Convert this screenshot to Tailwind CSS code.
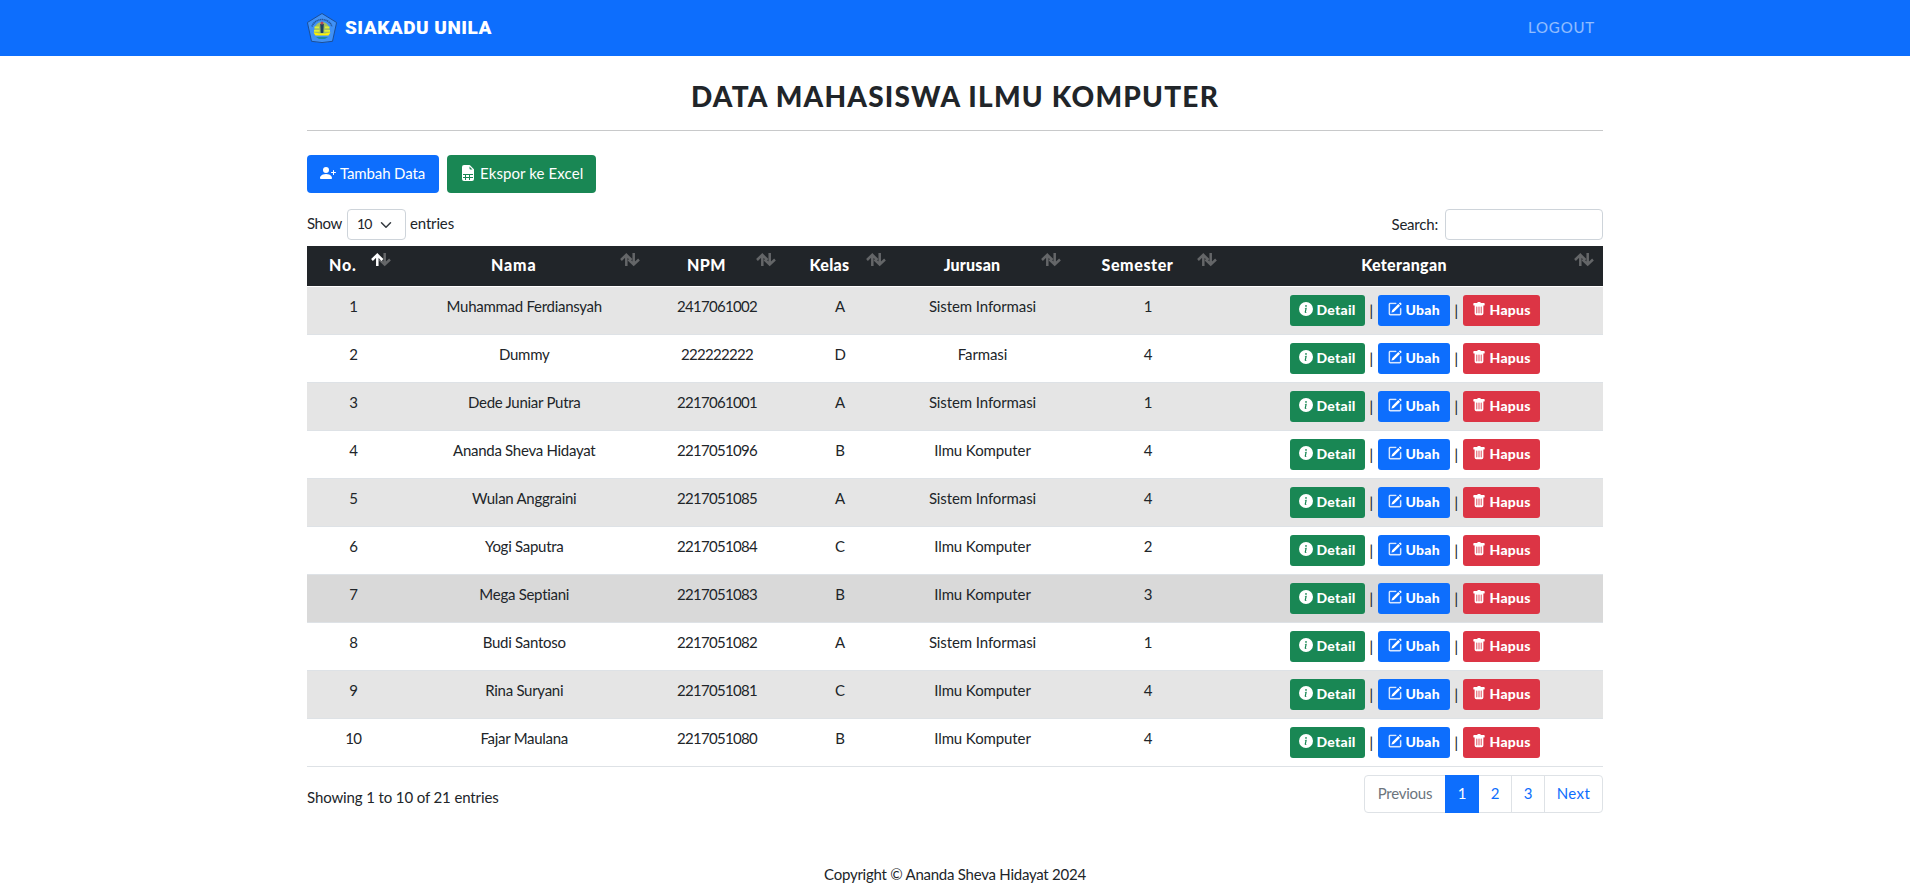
<!DOCTYPE html>
<html lang="id">
<head>
<meta charset="utf-8">
<title>SIAKADU UNILA</title>
<script src="https://cdn.jsdelivr.net/npm/@tailwindcss/browser@4"></script>
</head>
<body class="bg-white font-['Lato','Liberation_Sans',sans-serif] text-[15px] leading-6 tracking-[-0.2px] text-[#212529]">
<svg class="hidden">
  <symbol id="info" viewBox="0 0 16 16"><path d="M8 16A8 8 0 1 0 8 0a8 8 0 0 0 0 16zm.93-9.412-1 4.705c-.07.34.029.533.304.533.194 0 .487-.07.686-.246l-.088.416c-.287.346-.92.598-1.465.598-.703 0-1.002-.422-.808-1.319l.738-3.468c.064-.293.006-.399-.287-.47l-.451-.081.082-.381 2.290-.287zM8 5.500a1 1 0 1 1 0-2 1 1 0 0 1 0 2z"/></symbol>
  <symbol id="edit" viewBox="0 0 16 16"><path d="M15.502 1.940a.5.5 0 0 1 0 .706L14.459 3.690l-2-2L13.502.646a.5.5 0 0 1 .707 0l1.293 1.293zm-1.750 2.456-2-2L4.939 9.210a.5.5 0 0 0-.121.196l-.805 2.414a.25.25 0 0 0 .316.316l2.414-.805a.5.5 0 0 0 .196-.120l6.813-6.814z"/><path fill-rule="evenodd" d="M1 13.500A1.500 1.500 0 0 0 2.500 15h11a1.500 1.500 0 0 0 1.500-1.500v-6a.5.5 0 0 0-1 0v6a.5.5 0 0 1-.5.5h-11a.5.5 0 0 1-.5-.5v-11a.5.5 0 0 1 .5-.5H9a.5.5 0 0 0 0-1H2.500A1.500 1.500 0 0 0 1 2.500v11z" stroke="currentColor" stroke-width=".4"/></symbol>
  <symbol id="trash" viewBox="0 0 16 16"><path d="M2.500 1a1 1 0 0 0-1 1v1a1 1 0 0 0 1 1H3v9a2 2 0 0 0 2 2h6a2 2 0 0 0 2-2V4h.5a1 1 0 0 0 1-1V2a1 1 0 0 0-1-1H10a1 1 0 0 0-1-1H7a1 1 0 0 0-1 1H2.500zm3 4a.5.5 0 0 1 .5.5v7a.5.5 0 0 1-1 0v-7a.5.5 0 0 1 .5-.5zM8 5a.5.5 0 0 1 .5.5v7a.5.5 0 0 1-1 0v-7A.5.5 0 0 1 8 5zm3 .5v7a.5.5 0 0 1-1 0v-7a.5.5 0 0 1 1 0z"/></symbol>
</svg>

<nav class="h-14 bg-[#0d6efd]">
  <div class="mx-auto flex h-full w-[1296px] items-center justify-between">
    <a class="flex items-center gap-2">
      <svg class="size-[30px]" viewBox="0 0 30 30">
        <path d="M15 .5 29.600 9.500 25.500 28.300 Q15 30.800 4.500 28.300L.4 9.500z" fill="#4091f7" stroke="#1d4f96" stroke-width="1"/>
        <path d="M5 13.500a10.500 10 0 0 1 20 0" fill="none" stroke="#25579b" stroke-width="1.500" stroke-dasharray="1.300 .5"/>
        <path d="M7 20c0-7 3-11 8-11s8 4 8 11z" fill="#a3bf63"/>
        <path d="M7.500 13.500h4.500v1.800H7.500zm10.500 0h4.500v1.800h-4.500zM7 17h5.500v1.800H7zm10.500 0h5.500v1.800h-5.500z" fill="#dff034"/>
        <path d="M13.200 11h3.600l-.5 9h-2.600z" fill="#1f4060"/><circle cx="15" cy="10" r="1.500" fill="#b4475c"/>
        <path d="M6.500 19.500l5.500.7h6l5.500-.7-2 3h-13z" fill="#fff200"/>
        <path d="M9 24.300h12l-3 1.500h-6z" fill="#128a86"/>
      </svg>
      <span class="font-['Roboto'] text-[19px] font-black tracking-[0.48px] text-white">SIAKADU UNILA</span>
    </a>
    <a class="mr-2 pb-[3px] tracking-[0.82px] text-white/55">LOGOUT</a>
  </div>
</nav>

<main class="mx-auto w-[1296px]">
  <h1 class="flex h-[74px] items-center justify-center pt-[6px] text-[28px] font-black tracking-[1.23px]">DATA MAHASISWA ILMU KOMPUTER</h1>
  <hr class="border-t border-[#c8c9ca]">
  <div class="mt-6 flex gap-2 text-white">
    <button class="flex h-[38px] w-[132px] items-center gap-1 rounded bg-[#0d6efd] pl-[13px]">
      <svg class="-mt-0.5 size-4" fill="currentColor" viewBox="0 0 16 16"><path d="M1 14s-1 0-1-1 1-4 6-4 6 3 6 4-1 1-1 1H1zm5-6a3 3 0 1 0 0-6 3 3 0 0 0 0 6z"/><path fill-rule="evenodd" d="M13.500 5a.5.5 0 0 1 .5.5V7h1.500a.5.5 0 0 1 0 1H14v1.500a.5.5 0 0 1-1 0V8h-1.500a.5.5 0 0 1 0-1H13V5.500a.5.5 0 0 1 .5-.5z"/></svg>
      <span class="pb-0.5 tracking-[-0.13px]">Tambah Data</span>
    </button>
    <button class="flex h-[38px] w-[149px] items-center gap-1 rounded bg-[#198754] pl-[13px]">
      <svg class="-mt-0.5 size-4" fill="currentColor" viewBox="0 0 16 16"><path d="M6 12v-2h3v2H6z"/><path d="M9.293 0H4a2 2 0 0 0-2 2v12a2 2 0 0 0 2 2h8a2 2 0 0 0 2-2V4.707A1 1 0 0 0 13.707 4L10 .293A1 1 0 0 0 9.293 0zM9.500 3.500v-2l3 3h-2a1 1 0 0 1-1-1zM3 9h10v1h-3v2h3v1h-3v2H9v-2H6v2H5v-2H3v-1h2v-2H3V9z"/></svg>
      <span class="pb-0.5 tracking-[0.1px]">Ekspor ke Excel</span>
    </button>
  </div>

  <div class="mt-4 flex h-[31px] items-center justify-between">
    <div class="flex items-center">
      <span class="w-10 pb-1 tracking-[-0.39px]">Show</span>
      <div class="flex h-[31px] w-[59px] items-center gap-[9px] rounded border border-[#ced4da] pl-[9px] text-sm">
        <span class="w-[14px] pb-px tracking-[-0.8px]">10</span>
        <svg class="size-3" viewBox="0 0 16 16" fill="none" stroke="#343a40" stroke-width="2" stroke-linecap="round" stroke-linejoin="round"><path d="m2 5 6 6 6-6"/></svg>
      </div>
      <span class="pb-1 pl-1 tracking-[-0.15px]">entries</span>
    </div>
    <div class="flex items-center">
      <span class="mr-[7px] pb-0.5 tracking-[-0.2px]">Search:</span>
      <div class="h-[31px] w-[158px] rounded border border-[#ced4da]"></div>
    </div>
  </div>

  <table class="mt-[6px] w-[1296px] table-fixed border-separate border-spacing-0 text-center">
    <colgroup><col class="w-[92.5px]"><col class="w-[249.5px]"><col class="w-[136px]"><col class="w-[110px]"><col class="w-[175px]"><col class="w-[156px]"><col class="w-[377px]"></colgroup>
    <thead><tr id="head"></tr></thead>
    <tbody id="body"></tbody>
  </table>

  <div class="mt-2 flex justify-between">
    <div class="pt-[10px] tracking-[-0.12px]">Showing 1 to 10 of 21 entries</div>
    <div class="flex h-[38px] w-[239px] rounded border border-[#dee2e6] text-[#0d6efd] *:flex *:items-center *:justify-center *:pb-0.5">
      <span class="w-20 tracking-[-0.25px] text-[#6c757d]">Previous</span>
      <span class="-my-px w-[34px] bg-[#0d6efd] text-white">1</span>
      <span class="w-[33px] border-r border-[#dee2e6]">2</span>
      <span class="w-[33px] border-r border-[#dee2e6]">3</span>
      <span class="w-[57px] tracking-[0.4px]">Next</span>
    </div>
  </div>
</main>
<footer class="mt-[49px] text-center tracking-[-0.25px]">Copyright © Ananda Sheva Hidayat 2024</footer>

<script>
const heads = [['No.','tracking-[0.8px]'],['Nama','tracking-[0.9px]'],['NPM','tracking-[0.4px]'],['Kelas','tracking-[0.3px]'],['Jurusan','tracking-[0.2px]'],['Semester','tracking-[0.6px]'],['Keterangan','tracking-[0.3px]']];
document.getElementById('head').innerHTML = heads.map(([t, k], i) => `
  <th class="h-[41px] border-b border-white bg-[#212529] bg-clip-padding p-0 align-top font-black text-white">
    <div class="flex h-10 items-start pt-[7px] pr-[9px] pl-[6px]">
      <span class="-mr-[3px] flex-1 pr-px text-base ${k}">${t}</span>
      <svg class="h-[14px] w-5 shrink-0" viewBox="0 0 20 14" fill="none" stroke-width="2.500">
        <path d="M13.700 0v11.500M8.500 6.500l5.200 5 5.300-5" stroke="#646668"/>
        <path d="M6.300 13V1.800M1 7l5.300-5.200L11.500 7" stroke="${i ? '#646668' : '#ffffff'}"/>
      </svg>
    </div>
  </th>`).join('');
const rows = [
  ['Muhammad Ferdiansyah','2417061002','A','Sistem Informasi',1],
  ['Dummy','222222222','D','Farmasi',4],
  ['Dede Juniar Putra','2217061001','A','Sistem Informasi',1],
  ['Ananda Sheva Hidayat','2217051096','B','Ilmu Komputer',4],
  ['Wulan Anggraini','2217051085','A','Sistem Informasi',4],
  ['Yogi Saputra','2217051084','C','Ilmu Komputer',2],
  ['Mega Septiani','2217051083','B','Ilmu Komputer',3],
  ['Budi Santoso','2217051082','A','Sistem Informasi',1],
  ['Rina Suryani','2217051081','C','Ilmu Komputer',4],
  ['Fajar Maulana','2217051080','B','Ilmu Komputer',4],
];
const icon = n => `<svg class="-mt-[3px] size-[14px]" fill="currentColor"><use href="#${n}"/></svg>`;
document.getElementById('body').innerHTML = rows.map((r, i) => `
  <tr class="${i === 6 ? 'bg-[#d9d9d9]' : i % 2 ? 'bg-white' : 'bg-[#e5e5e5]'} *:h-12 *:border-b *:border-[#dee2e6] *:p-0 *:pt-[7px] *:align-top">
    <td class="tracking-[-0.7px]">${i + 1}</td>
    <td class="tracking-[-0.28px]">${r[0]}</td>
    <td class="tracking-[-0.7px]">${r[1]}</td>
    <td>${r[2]}</td>
    <td class="tracking-[-0.1px]">${r[3]}</td>
    <td>${r[4]}</td>
    <td>
      <div class="mt-px flex h-[31px] items-center justify-center text-sm font-black tracking-[0.25px] text-white">
        <span class="flex h-[31px] w-[75px] items-center gap-1 rounded-[3px] bg-[#198754] pl-[9px]">${icon('info')}<span class="pb-0.5">Detail</span></span>
        <span class="w-[13px] pb-0.5 pl-px text-base font-normal text-[#212529]">|</span>
        <span class="flex h-[31px] w-[72px] items-center gap-1 rounded-[3px] bg-[#0d6efd] pl-[10px]">${icon('edit')}<span class="pb-0.5">Ubah</span></span>
        <span class="w-[13px] pb-0.5 pl-px text-base font-normal text-[#212529]">|</span>
        <span class="flex h-[31px] w-[77px] items-center gap-1 rounded-[3px] bg-[#dc3545] pl-[9px]">${icon('trash')}<span class="pb-0.5">Hapus</span></span>
      </div>
    </td>
  </tr>`).join('');
</script>
</body>
</html>
